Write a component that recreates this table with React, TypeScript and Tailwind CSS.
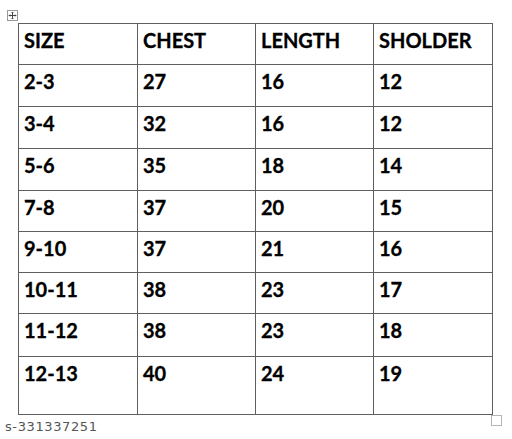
import React from "react";

const head = ["SIZE", "CHEST", "LENGTH", "SHOLDER"];
const rows = [
  ["2-3", "27", "16", "12"],
  ["3-4", "32", "16", "12"],
  ["5-6", "35", "18", "14"],
  ["7-8", "37", "20", "15"],
  ["9-10", "37", "21", "16"],
  ["10-11", "38", "23", "17"],
  ["11-12", "38", "23", "18"],
  ["12-13", "40", "24", "19"],
];
const heights = ["h-[41px]", "h-[42px]", "h-[42px]", "h-[42px]", "h-[41px]", "h-[41px]", "h-[41px]", "h-[43px]", "h-[58px]"];

const MoveIcon = () => (
  <svg width="11" height="11" viewBox="0 0 11 11" className="block">
    <rect x="0.5" y="0.5" width="10" height="10" fill="white" stroke="#9a9a9a" />
    <path d="M5.5 2v7M2 5.5h7" stroke="#444" strokeWidth="1" />
    <path d="M4.5 3 5.5 2 6.5 3M4.5 8 5.5 9 6.5 8M3 4.5 2 5.5 3 6.5M8 4.5 9 5.5 8 6.5" stroke="#444" fill="none" strokeWidth="0.8" />
  </svg>
);

export default function App() {
  return (
    <div className="w-[512px] h-[439px] bg-white relative overflow-hidden" style={{ fontFamily: "Lato, 'Open Sans', sans-serif" }}>
      <div className="absolute left-[7px] top-[10px]">
        <MoveIcon />
      </div>
      <div className="pl-[18px] pt-[23px]">
        <table className="border-collapse table-fixed w-[474px]">
          <colgroup>
            <col className="w-[119px]" />
            <col className="w-[118px]" />
            <col className="w-[118px]" />
            <col className="w-[119px]" />
          </colgroup>
          <tbody>
            {[head, ...rows].map((r, i) => (
              <tr key={i} className={heights[i]}>
                {r.map((c, j) => (
                  <td key={j} className="border border-[#5f5f5f] align-top pl-[5px] pt-[4px] text-[20px] leading-[24px] font-bold text-black [-webkit-text-stroke:0.3px_black]">
                    {c}
                  </td>
                ))}
              </tr>
            ))}
          </tbody>
        </table>
      </div>
      <div className="absolute left-[491px] top-[415px] w-[11px] h-[11px] border border-[#b5b5b5] bg-white" />
      <div className="pl-[5px] pt-[2px] text-[13px] text-[#555] tracking-[0.6px]" style={{ fontFamily: "'DejaVu Sans', sans-serif" }}>
        s-331337251
      </div>
    </div>
  );
}
